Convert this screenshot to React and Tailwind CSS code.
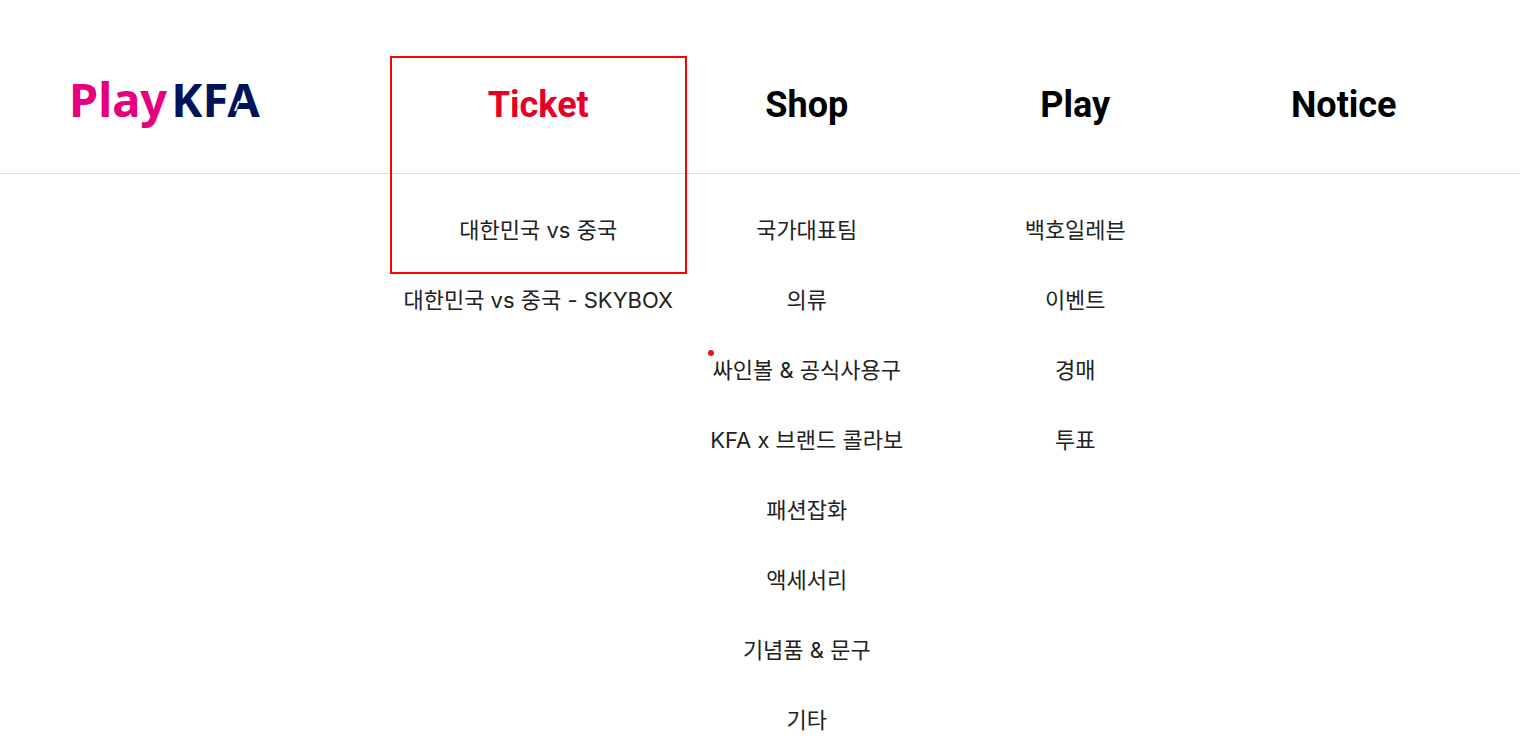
const menus = [
  { title: 'Ticket', active: true, items: ['대한민국 vs 중국', '대한민국 vs 중국 - SKYBOX'] },
  {
    title: 'Shop',
    items: ['국가대표팀', '의류', '싸인볼 & 공식사용구', 'KFA x 브랜드 콜라보', '패션잡화', '액세서리', '기념품 & 문구', '기타'],
  },
  { title: 'Play', items: ['백호일레븐', '이벤트', '경매', '투표'] },
  { title: 'Notice', items: [] },
];

function Logo() {
  return (
    <a
      href="#"
      className="flex w-[332px] shrink-0 items-baseline gap-1 pt-6 font-['Noto_Sans',sans-serif] text-[47px] leading-[72px] font-bold"
    >
      <span className="-ml-[3px] text-[#e6007e]">Play</span>
      <span className="relative text-[#00145a]">
        KFA
        <svg viewBox="0 0 34 36" className="absolute right-0 bottom-[17px] h-9 w-[34px]" aria-hidden="true">
          <path d="M13 19L9 29" stroke="#fff" strokeWidth="2" />
        </svg>
      </span>
    </a>
  );
}

export default function App() {
  return (
    <div className="min-h-screen overflow-hidden bg-white font-['Roboto','Noto_Sans_CJK_KR',sans-serif]">
      <header className="flex items-center border-b border-[#dddddd] pr-[42px] pl-[72px]">
        <Logo />
        <nav aria-label="Main" className="grid flex-1 grid-cols-4">
          {menus.map((menu) => (
            <div key={menu.title} className="relative pt-[77px] pb-10 text-center">
              <a
                href="#"
                className={
                  menu.active
                    ? 'block text-4xl leading-[56px] font-bold text-[#e60028]'
                    : 'block text-4xl leading-[56px] font-bold text-black'
                }
              >
                {menu.title}
              </a>
              {menu.active && (
                <span className="pointer-events-none absolute -inset-x-[14px] top-[56px] h-[218px] border-2 border-[#ff0000]" />
              )}
            </div>
          ))}
        </nav>
      </header>
      <div className="flex pt-[42px] pr-[42px] pl-[72px] font-['Inter','Noto_Sans_CJK_KR',sans-serif]">
        <div className="w-[332px] shrink-0" />
        <div className="grid flex-1 grid-cols-4">
          {menus.map((menu) => (
            <ul key={menu.title} className="flex flex-col items-center gap-[42px]">
              {menu.items.map((item) => (
                <li key={item} className="relative text-[22px] leading-7 whitespace-nowrap text-[#222222]">
                  {item.startsWith('싸인볼') && (
                    <span className="absolute -top-[6px] -left-[5px] size-[6px] rounded-full bg-[#ee1111]" />
                  )}
                  <a href="#">{item}</a>
                </li>
              ))}
            </ul>
          ))}
        </div>
      </div>
    </div>
  );
}
